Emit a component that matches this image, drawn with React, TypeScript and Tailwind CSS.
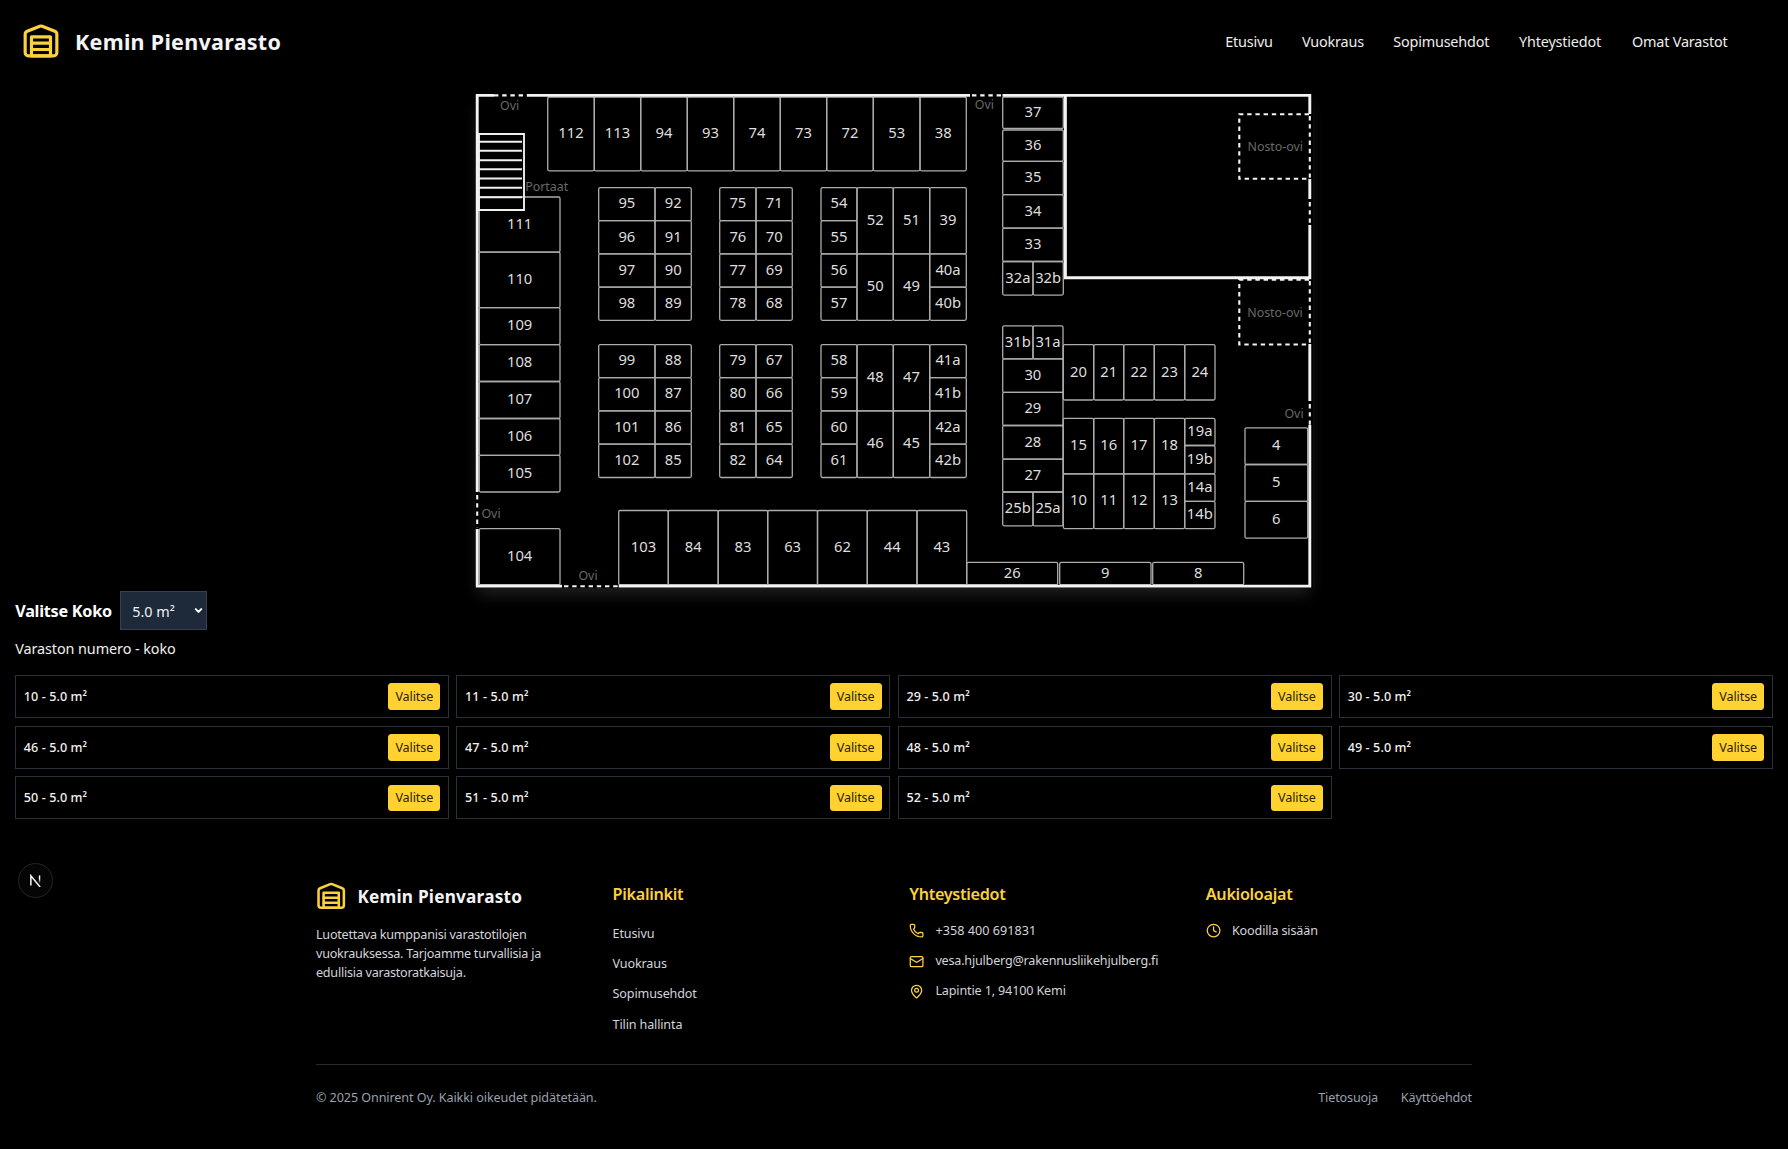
import React from "react";
import { ChevronDown, Clock, Mail, MapPin, Phone } from "lucide-react";

type Cell = [label: string, x1: number, y1: number, x2: number, y2: number];

/** Builds a horizontal run of cells between consecutive x edges. */
const across = (labels: string[], xs: number[], y1: number, y2: number): Cell[] =>
  labels.map((l, i) => [l, xs[i], y1, xs[i + 1], y2]);

/** Builds a vertical run of cells between consecutive y edges. */
const down = (labels: string[], x1: number, x2: number, ys: number[]): Cell[] =>
  labels.map((l, i) => [l, x1, ys[i], x2, ys[i + 1]]);

const upper = [187.7, 220.7, 253.9, 287.2, 320.3];
const lower = [344.6, 377.6, 410.9, 444.2, 477.5];
const east = [1063.3, 1093.7, 1123.7, 1154.3, 1184.7, 1215];

const cells: Cell[] = [
  ...across(
    ["112", "113", "94", "93", "74", "73", "72", "53", "38"],
    [547.7, 594.3, 640.7, 687.3, 733.7, 780.3, 826.7, 873.3, 920, 966.3],
    97,
    170.8
  ),
  ...down(["111", "110", "109", "108", "107", "106", "105"], 479.3, 560, [
    197, 252.2, 307.7, 344.6, 381.5, 418.5, 455.3, 492,
  ]),
  ["104", 479.3, 528.6, 560, 584.7],
  ...down(["95", "96", "97", "98"], 598.7, 655, upper),
  ...down(["92", "91", "90", "89"], 655, 691.3, upper),
  ...down(["75", "76", "77", "78"], 719.7, 756, upper),
  ...down(["71", "70", "69", "68"], 756, 792.3, upper),
  ...down(["54", "55", "56", "57"], 821, 857, upper),
  ...across(["52", "51", "39"], [857, 893.3, 929.7, 966.3], 187.7, 253.9),
  ...across(["50", "49"], [857, 893.3, 929.7], 253.9, 320.3),
  ...down(["40a", "40b"], 929.7, 966.3, [253.9, 287.2, 320.3]),
  ...down(["99", "100", "101", "102"], 598.7, 655, lower),
  ...down(["88", "87", "86", "85"], 655, 691.3, lower),
  ...down(["79", "80", "81", "82"], 719.7, 756, lower),
  ...down(["67", "66", "65", "64"], 756, 792.3, lower),
  ...down(["58", "59", "60", "61"], 821, 857, lower),
  ...across(["48", "47"], [857, 893.3, 929.7], 344.6, 410.9),
  ...across(["46", "45"], [857, 893.3, 929.7], 410.9, 477.5),
  ...down(["41a", "41b", "42a", "42b"], 929.7, 966.3, lower),
  ...across(
    ["103", "84", "83", "63", "62", "44", "43"],
    [618.7, 668.3, 718.2, 767.7, 817.5, 867.3, 917, 966.7],
    510.5,
    584.7
  ),
  ["37", 1002.7, 97, 1063.3, 128.5],
  ...down(["36", "35", "34", "33"], 1002.7, 1063.3, [130, 161.3, 194.7, 228.1, 261.5]),
  ...across(["32a", "32b"], [1002.7, 1033, 1063.3], 261.5, 295.1),
  ...across(["31b", "31a"], [1002.7, 1033, 1063], 325.9, 358.9),
  ...down(["30", "29", "28", "27"], 1002.7, 1063, [358.9, 392.4, 425.5, 459.2, 492]),
  ...across(["25b", "25a"], [1002.7, 1033, 1063], 492, 525.8),
  ...across(["20", "21", "22", "23", "24"], east, 344.6, 400),
  ...across(["15", "16", "17", "18"], east, 418.4, 473.8),
  ...across(["10", "11", "12", "13"], east, 473.8, 528.6),
  ...down(["19a", "19b", "14a", "14b"], 1184.7, 1215, [418.4, 445.5, 473.8, 501.4, 528.6]),
  ...down(["4", "5", "6"], 1245, 1307.7, [427.8, 464.5, 501.4, 538.2]),
  ["26", 966.7, 562.4, 1057.7, 584.7],
  ["9", 1059.7, 562.4, 1151, 584.7],
  ["8", 1152.7, 562.4, 1243.7, 584.7],
];

const notes: [string, number, number][] = [
  ["Ovi", 509.7, 110],
  ["Portaat", 546.7, 191],
  ["Ovi", 984.3, 109.2],
  ["Nosto-ovi", 1275.3, 151],
  ["Nosto-ovi", 1275, 317.2],
  ["Ovi", 1294, 417.5],
  ["Ovi", 491, 518.2],
  ["Ovi", 588, 580.3],
];

function FloorPlan() {
  return (
    <svg
      viewBox="475 93 838 495"
      className="block h-[495px] w-[838px] bg-black shadow-[0_10px_14px_-3px_rgba(255,255,255,0.12)]"
      fontFamily="'Noto Sans', sans-serif"
      textAnchor="middle"
    >
      <g fill="none" stroke="#acacac" strokeWidth="1.3">
        {cells.map(([l, x1, y1, x2, y2]) => (
          <rect key={l} x={x1} y={y1} width={x2 - x1} height={y2 - y1} rx="1.5" />
        ))}
      </g>
      <g fill="#dedede" fontSize="14.8">
        {cells.map(([l, x1, y1, x2, y2]) => (
          <text key={l} x={(x1 + x2) / 2} y={(y1 + y2) / 2 + 4.2}>
            {l}
          </text>
        ))}
      </g>
      <g fill="#686868" fontSize="12.4">
        {notes.map(([l, x, y], i) => (
          <text key={i} x={x} y={y}>
            {l}
          </text>
        ))}
      </g>
      {/* Solid outer walls and the separate hall */}
      <path
        fill="none"
        stroke="#f4f4f4"
        strokeWidth="2.9"
        d="M494 95.4H477.2V492M527 95.4H970M1002.5 95.4H1309.8V114M1309.8 179V199M1309.8 225V277.8H1065.4V95.4M1309.8 344V401M1309.8 425V586.1H618.7M562 586.1H475.8M477.2 586.1V529"
      />
      {/* Door openings */}
      <path
        fill="none"
        stroke="#f4f4f4"
        strokeWidth="2.1"
        strokeDasharray="4.4 3.8"
        d="M494 95.4H527M972 95.4H1002M1309.8 116V178M1309.8 202V225M1309.8 281V344M1309.8 404V425M477.2 495V528M564 586.2H618M1309 114.3H1239.3V178.7H1309M1309 279.8H1239.3V344.5H1309"
      />
      {/* Stairs */}
      <path
        fill="none"
        stroke="#efefef"
        strokeWidth="1.9"
        d="M479 134H524V210H479ZM479 141.7H522M479 150.7H522M479 160.3H522M479 169.3H522M479 178.5H522M479 187.7H522M479 197.2H522"
      />
    </svg>
  );
}

function WarehouseIcon({ className }: { className: string }) {
  return (
    <svg
      viewBox="0 0 24 24"
      className={className}
      fill="none"
      stroke="currentColor"
      strokeWidth="2"
      strokeLinecap="round"
      strokeLinejoin="round"
    >
      <path d="M22 8.35V20a2 2 0 0 1-2 2H4a2 2 0 0 1-2-2V8.35A2 2 0 0 1 3.26 6.5l8-3.2a2 2 0 0 1 1.48 0l8 3.2A2 2 0 0 1 22 8.35Z" />
      <path d="M6 18h12M6 14h12" />
      <rect width="12" height="12" x="6" y="10" />
    </svg>
  );
}

const nav: [string, string][] = [
  ["Etusivu", "w-[46.5px]"],
  ["Vuokraus", "w-[60.8px]"],
  ["Sopimusehdot", "w-[95.5px]"],
  ["Yhteystiedot", "w-[82.5px]"],
  ["Omat Varastot", "w-[96px]"],
];

const units = ["10", "11", "29", "30", "46", "47", "48", "49", "50", "51", "52"];

function Heading({ children }: { children: React.ReactNode }) {
  return (
    <h3 className="text-[16.2px] font-semibold leading-[30px] tracking-[-0.3px] text-[#fbd13c]">
      {children}
    </h3>
  );
}

export default function App() {
  return (
    <div className="relative flex min-h-[1149px] flex-col bg-black font-['Noto_Sans',sans-serif] text-white">
      <header className="flex h-[93px] items-start justify-between pl-[22px] pr-[60px] pt-[20.5px]">
        <div className="flex h-[38px] items-center gap-[15px]">
          <WarehouseIcon className="size-[38px] text-[#fbd13c]" />
          <span className="whitespace-nowrap pt-1 text-[21.5px] font-bold leading-[38px] tracking-[0.28px] text-[#f3f4f6]">
            Kemin Pienvarasto
          </span>
        </div>
        <nav className="flex h-[43px] items-center gap-[30.4px] text-[14.4px] tracking-[-0.18px] text-[#eeeeee]">
          {nav.map(([label, width]) => (
            <a key={label} className={`${width} whitespace-nowrap`}>
              {label}
            </a>
          ))}
        </nav>
      </header>

      <main className="flex flex-col px-[15.2px]">
        <div className="flex justify-center">
          <FloorPlan />
        </div>
        <div className="mt-[3px] flex h-[39px] items-center">
          <label className="w-[105px] whitespace-nowrap pt-px text-[16.2px] font-bold tracking-[-0.25px]">
            Valitse Koko
          </label>
          <div className="relative">
            <select className="h-[39px] w-[87px] appearance-none border border-[#364153] bg-[#1e2939] pl-[11px] pt-[2px] text-[14.4px] text-[#eef0f3] outline-none">
              <option>5.0 m²</option>
            </select>
            <ChevronDown className="absolute right-[3.5px] top-[14px] size-[11px]" strokeWidth={4.4} />
          </div>
        </div>
        <p className="mt-[7px] h-[23px] text-[14.4px] leading-[23px] tracking-[-0.08px] text-[#f0f0f0]">
          Varaston numero - koko
        </p>
        <div className="mt-[15px] grid grid-cols-4 gap-[7.6px]">
          {units.map((u) => (
            <div
              key={u}
              className="flex h-[43.1px] items-center justify-between border border-[#2b313c] px-[7.6px]"
            >
              <span className="pt-[2px] text-[12.6px] font-medium tracking-[0.08px] text-[#f0f0f0]">
                {u} - 5.0 m²
              </span>
              <button className="h-[26.6px] w-[52px] rounded-[3.5px] bg-[#ffd230] pt-[2px] text-[12.6px] tracking-[-0.12px] text-[#2a2205]">
                Valitse
              </button>
            </div>
          ))}
        </div>
      </main>

      <div className="absolute left-[18px] top-[863px] flex size-[35px] items-center justify-center rounded-full border border-[#262626] bg-[#050505]">
        <svg viewBox="0 0 14 14" className="size-[13px]" fill="none" strokeWidth="1.7">
          <defs>
            <linearGradient id="stem" x1="0" y1="0" x2="0" y2="1">
              <stop offset="0.4" stopColor="#fff" />
              <stop offset="1" stopColor="#fff" stopOpacity="0" />
            </linearGradient>
          </defs>
          <path d="M2 12.5V2L12 14" stroke="#eee" />
          <rect x="10.6" y="1.5" width="1.5" height="9" fill="url(#stem)" />
        </svg>
      </div>

      <footer className="mx-auto mt-[59.5px] w-[1156px] text-[12.6px] tracking-[-0.15px] text-[#d1d5dc]">
        <div className="grid h-[185px] grid-cols-4 gap-[30.4px]">
          <div>
            <div className="-mt-px flex items-center gap-[11px]">
              <WarehouseIcon className="size-[30.4px] text-[#fbd13c]" />
              <span className="whitespace-nowrap pt-[4px] text-[17.2px] font-bold leading-[30px] tracking-[0.22px] text-[#f3f4f6]">
                Kemin Pienvarasto
              </span>
            </div>
            <p className="mt-[14px] whitespace-nowrap leading-[18.8px] tracking-[-0.25px]">
              Luotettava kumppanisi varastotilojen
              <br />
              vuokrauksessa. Tarjoamme turvallisia ja
              <br />
              edullisia varastoratkaisuja.
            </p>
          </div>
          <div>
            <Heading>Pikalinkit</Heading>
            <ul className="mt-[10px] leading-[30.2px]">
              <li>Etusivu</li>
              <li>Vuokraus</li>
              <li>Sopimusehdot</li>
              <li>Tilin hallinta</li>
            </ul>
          </div>
          <div>
            <Heading>Yhteystiedot</Heading>
            <ul className="mt-[7px] leading-[30.2px]">
              <li className="flex items-center gap-[11px] tracking-[0.05px]">
                <Phone className="size-[15.2px] text-[#fbd13c]" />
                +358 400 691831
              </li>
              <li className="flex items-center gap-[11px] tracking-[-0.2px]">
                <Mail className="size-[15.2px] text-[#fbd13c]" />
                vesa.hjulberg@rakennusliikehjulberg.fi
              </li>
              <li className="flex items-center gap-[11px]">
                <MapPin className="size-[15.2px] text-[#fbd13c]" />
                Lapintie 1, 94100 Kemi
              </li>
            </ul>
          </div>
          <div>
            <Heading>Aukioloajat</Heading>
            <div className="mt-[7px] flex items-center gap-[11px] leading-[30.2px]">
              <Clock className="size-[15.2px] text-[#fbd13c]" />
              Koodilla sisään
            </div>
          </div>
        </div>
        <div className="flex justify-between border-t border-[#262a32] pt-[23px] leading-[20px] text-[#99a1af]">
          <span className="tracking-[-0.09px]">© 2025 Onnirent Oy. Kaikki oikeudet pidätetään.</span>
          <div className="flex gap-[22.8px]">
            <a>Tietosuoja</a>
            <a>Käyttöehdot</a>
          </div>
        </div>
      </footer>
    </div>
  );
}
